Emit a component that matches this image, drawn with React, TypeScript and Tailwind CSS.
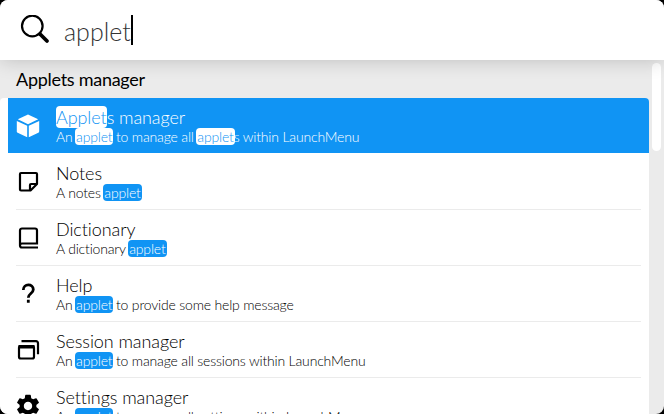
import type { ReactNode } from "react";
import { MdSettings } from "react-icons/md";

type Item = { title: string; text: string; icon: ReactNode };

const items: Item[] = [
  {
    title: "Applets manager",
    text: "An applet to manage all applets within LaunchMenu",
    icon: (
      <svg width="24" height="24" viewBox="0 0 24 24" fill="currentColor">
        <path d="M12 .6 22.2 5.3 12 10.2 1.8 5.3z" />
        <path d="M.8 6.9 11.2 11.8v11.5L1.7 18.8Q.8 18.3.8 17.3z" />
        <path d="M23.2 6.9 12.8 11.8v11.5l9.5-4.5q.9-.5.9-1.500z" />
      </svg>
    ),
  },
  {
    title: "Notes",
    text: "A notes applet",
    icon: (
      <svg width="24" height="24" viewBox="0 0 24 24" fill="none" stroke="currentColor" strokeWidth="2.200" strokeLinejoin="round">
        <path d="M5 3h15a1 1 0 0 1 1 1v10l-6.500 6.500H5a1 1 0 0 1-1-1V4a1 1 0 0 1 1-1z" />
        <path d="M14 20.500V15a1 1 0 0 1 1-1h6" />
      </svg>
    ),
  },
  {
    title: "Dictionary",
    text: "A dictionary applet",
    icon: (
      <svg width="24" height="24" viewBox="0 0 24 24" fill="none" stroke="currentColor" strokeWidth="2.200">
        <path d="M22 21.500H6a2 2 0 0 1-2-2V4.500a2 2 0 0 1 2-2h13a2 2 0 0 1 2 2V17.500H6a2 2 0 0 0-2 2" />
      </svg>
    ),
  },
  {
    title: "Help",
    text: "An applet to provide some help message",
    icon: (
      <svg width="24" height="24" viewBox="0 0 24 24" fill="none" stroke="currentColor" strokeWidth="2.800">
        <path d="M7.300 8C7.300 1.300 17.300 1.300 17.300 7.500c0 4-5 4-5 8.200" />
        <path d="M12.300 17.800v3" />
      </svg>
    ),
  },
  {
    title: "Session manager",
    text: "An applet to manage all sessions within LaunchMenu",
    icon: (
      <svg width="24" height="24" viewBox="0 0 24 24" fill="none" stroke="currentColor" strokeWidth="2.200">
        <rect x="3" y="8" width="15" height="12.500" rx="1.800" />
        <path d="M2.500 8.700h16" strokeWidth="3.500" />
        <path d="M5.500 3.200h14.500a2 2 0 0 1 2 2v11" />
      </svg>
    ),
  },
  {
    title: "Settings manager",
    text: "An applet to manage all settings within LaunchMenu",
    icon: <MdSettings size={28} />,
  },
];

function Highlighted({ text, selected, tight = false }: { text: string; selected: boolean; tight?: boolean }) {
  return (
    <>
      {text.split(/(applet)/i).map((part, i) =>
        part.toLowerCase() === "applet" ? (
          <span
            key={i}
            className={
              (tight ? "rounded " : "-mx-px rounded px-px ") +
              (selected ? "bg-white text-[#1094f4]" : "bg-[#1094f4] text-white")
            }
          >
            {part}
          </span>
        ) : (
          part
        ),
      )}
    </>
  );
}

export default function App() {
  return (
    <div className="h-[414px] w-[664px] overflow-hidden bg-black">
      <div className="flex h-full flex-col overflow-hidden rounded-[8px] bg-[#ebebeb] font-['Lato',sans-serif] font-light text-black [font-variant-ligatures:none]">
        <header className="z-10 flex h-[60px] shrink-0 items-center bg-white pl-5 shadow-[0_0_20px_rgba(0,0,0,0.2)]">
          <svg width="30" height="30" viewBox="0 0 30 30" fill="none" stroke="black">
            <circle cx="12.300" cy="11" r="10.300" strokeWidth="2.200" />
            <path d="m20 19 7 7" strokeWidth="3.800" strokeLinecap="round" />
          </svg>
          <span className="ml-[14px] mt-[2px] text-[25px] leading-[30px] text-[#333]">applet</span>
          <span className="h-[30px] w-[2px] bg-black" />
        </header>
        <div className="flex min-h-0 grow">
          <main className="w-[649px] overflow-hidden">
            <h2 className="h-[38px] pl-4 text-[18px] font-normal leading-[38px] tracking-[-0.27px]">Applets manager</h2>
            <div className="rounded-t-[4px] bg-white pl-2">
              {items.map((item, i) => (
                <div
                  key={item.title}
                  className={i === 0 ? "h-14 rounded-tr-[4px] border-b border-white bg-[#1094f4] px-2 text-white" : "h-14 px-2"}
                >
                  <div className={i === 0 ? "flex h-full" : "flex h-full border-b border-[#ebebeb]"}>
                    <div className="flex w-6 shrink-0 items-center justify-center">
                      <div className="shrink-0">{item.icon}</div>
                    </div>
                    <div className="ml-4 whitespace-nowrap pt-2">
                      <div className="text-[18px] leading-[23px] tracking-[-0.08px]">
                        <Highlighted text={item.title} selected={i === 0} tight />
                      </div>
                      <div className="-mt-px text-[14px] leading-[17px] tracking-[-0.18px]">
                        <Highlighted text={item.text} selected={i === 0} />
                      </div>
                    </div>
                  </div>
                </div>
              ))}
            </div>
          </main>
          <div className="w-[15px] pl-[3px] pt-[3px]">
            <div className="h-[88px] w-[9px] rounded-full bg-white" />
          </div>
        </div>
      </div>
    </div>
  );
}
